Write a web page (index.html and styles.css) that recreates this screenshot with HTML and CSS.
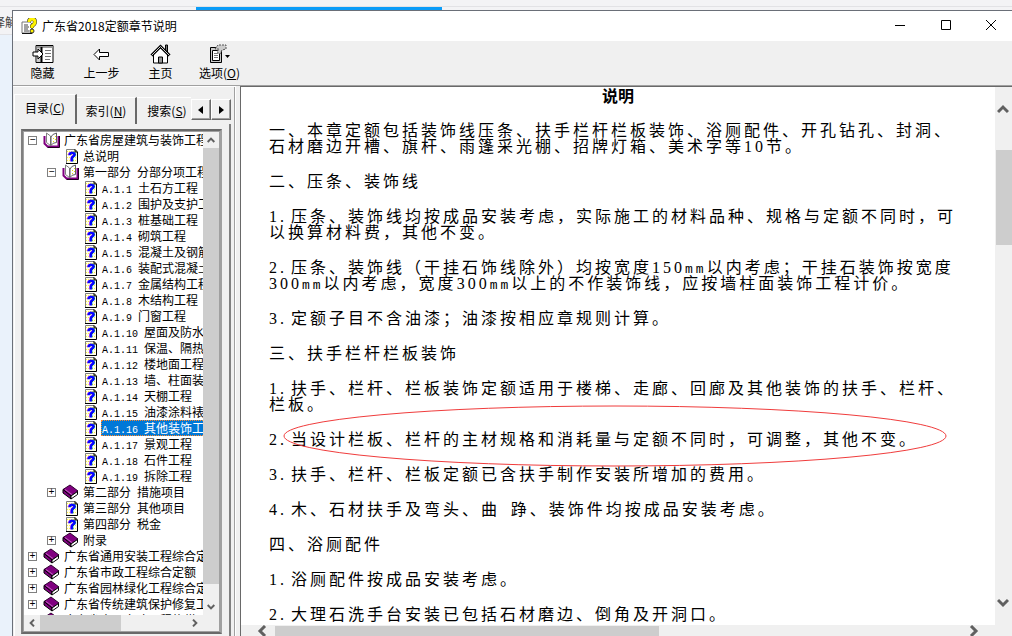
FILE: index.html
```html
<!DOCTYPE html>
<html lang="zh-CN">
<head>
<meta charset="utf-8">
<title>广东省2018定额章节说明</title>
<link rel="stylesheet" href="styles.css">
</head>
<body>
<svg class="defs" aria-hidden="true">
  <symbol id="open" viewBox="0 0 17 16">
    <path d="M1.500 4v7.500l3 3h11V4" fill="#fff" stroke="#800080" stroke-width="2"/>
    <path d="M4.500 15.500h12V4" fill="none" stroke="#200020"/>
    <path d="M3.500 1l4 3v9.500l-4-3z" fill="#fff" stroke="#808080"/>
    <path d="M8 13.500V5q1-3 5.500-4v9.500q-4 0-5.500 3z" fill="#fff" stroke="#606060"/>
    <path d="M10 6.500h1M12 4.500h1M10 9.500h1M12 7.500h1" stroke="#e8e000"/>
  </symbol>
  <symbol id="book" viewBox="0 0 17 16">
    <path d="M1 5.500L8 1l8 6-7 5z" fill="#800080" stroke="#300030"/>
    <path d="M1 5.500V9l8 6v-3z" fill="#800080" stroke="#000"/>
    <path d="M9 12l6.500-4.500v3L9 15z" fill="#fff" stroke="#000"/>
    <path d="M3 5.500l7 5" stroke="#c060c0"/>
  </symbol>
  <symbol id="page" viewBox="0 0 12 15">
    <path d="M0 0h10l2 3v12H0z" fill="#ffffe8"/>
    <path d="M1 2.500h9M1 5.500h9M1 8.500h9M1 11.500h9" stroke="#fff040" stroke-dasharray="1 1"/>
    <path d="M.5 14V.5H9" fill="none" stroke="#808080"/>
    <path d="M0 14.500h11.500V3L9 .5V3h2" fill="none" stroke="#000"/>
    <text x="6" y="12" text-anchor="middle" class="mark">?</text>
  </symbol>
  <symbol id="up" viewBox="0 0 12 10"><path d="M1 8l5-5 5 5" fill="none" stroke="#606060" stroke-width="3"/></symbol>
  <symbol id="down" viewBox="0 0 12 10"><path d="M1 2l5 5 5-5" fill="none" stroke="#606060" stroke-width="3"/></symbol>
  <symbol id="left" viewBox="0 0 10 12"><path d="M8 1L3 6l5 5" fill="none" stroke="#606060" stroke-width="3"/></symbol>
  <symbol id="right" viewBox="0 0 10 12"><path d="M2 1l5 5-5 5" fill="none" stroke="#606060" stroke-width="3"/></symbol>
</svg>

<div class="desktop">
  <div class="back-top"><div class="back-tab"></div></div>
  <div class="back-side"><span class="back-text">译解</span></div>
  <main class="window">
    <header class="titlebar">
      <svg class="app-icon" viewBox="0 0 16 16" aria-hidden="true">
        <path d="M1 4h8l2 2v9H1z" fill="#fff" stroke="#777"/>
        <path d="M11 7v8.500H1" fill="none" stroke="#111"/>
        <path d="M3 7h4M3 9h5M3 11h4M3 13h5" stroke="#444"/>
        <path d="M8 4q0-3 3-3t3 3q0 2-3 4v2" fill="none" stroke="#333" stroke-width="4"/>
        <path d="M8 4q0-3 3-3t3 3q0 2-3 4v2" fill="none" stroke="#fff200" stroke-width="3"/>
        <circle cx="11" cy="13" r="2" fill="#fff200" stroke="#333"/>
      </svg>
      <h1 class="title">广东省2018定额章节说明</h1>
      <button class="caption" aria-label="最小化"><svg viewBox="0 0 10 10"><path d="M0 5.500h10" /></svg></button>
      <button class="caption" aria-label="最大化"><svg viewBox="0 0 10 10"><path d="M.5.5h9v9h-9z"/></svg></button>
      <button class="caption close" aria-label="关闭"><svg viewBox="0 0 10 10"><path d="M0 0l10 10M10 0L0 10"/></svg></button>
    </header>
    <nav class="toolbar">
      <button class="tool"><svg viewBox="0 0 22 20" aria-hidden="true">
        <path d="M4 1.500h17v17H4z" fill="#fff" stroke="#000"/><path d="M5 2h15.500v2H5z" fill="#999"/><path d="M5 4h4v14H5z" fill="#ccc"/><path d="M9.500 3v15" stroke="#000" stroke-width="2"/>
        <path d="M13 6.500h6M13 9.500h6M13 12.500h6M13 15.500h5" stroke="#777"/><path d="M1 8h5V5l5 5-5 5v-3H1z" fill="#fff" stroke="#000"/></svg><span>隐藏</span></button>
      <button class="tool"><svg viewBox="0 0 22 20" aria-hidden="true"><path d="M3 10.500L8.500 5v3.500h9v4h-9V16z" fill="#fff" stroke="#000"/></svg><span>上一步</span></button>
      <button class="tool"><svg viewBox="0 0 22 20" aria-hidden="true"><path d="M15.500 1h2v9h-2z" fill="#777" stroke="#000"/><path d="M3.500 10L10.500 3l7 7v9h-14z" fill="#fff" stroke="#000"/><path d="M1.500 11.500l9-9 9 9" fill="none" stroke="#000" stroke-width="3"/><path d="M1.500 11.500l9-9 9 9" fill="none" stroke="#ccc"/><path d="M8.500 13h4v6h-4z" fill="#999" stroke="#000"/></svg><span>主页</span></button>
      <button class="tool"><svg viewBox="0 0 22 20" aria-hidden="true"><path d="M1.500 3.500h11v15h-11z" fill="#ccc" stroke="#000"/><path d="M3.500 6.500h7v10h-7z" fill="#fff" stroke="#000"/><path d="M5 9.500h4M5 11.500h4M5 13.500h4" stroke="#777"/><path d="M6 5l3-4h8v4l-4 1-2 4-3-2 2-3z" fill="#ccc" stroke="#555" stroke-dasharray="2 1"/><path d="M16 11h5l-2.500 3z"/></svg><span>选项(<u>O</u>)</span></button>
    </nav>
    <div class="body">
      <aside class="sidebar">
        <div class="tabs">
          <button class="tab active">目录(<u>C</u>)</button>
          <button class="tab">索引(<u>N</u>)</button>
          <button class="tab last">搜索(<u>S</u>)</button>
          <button class="spin" aria-label="向左"><svg viewBox="0 0 10 10"><path d="M7 1v8L2 5z"/></svg></button>
          <button class="spin" aria-label="向右"><svg viewBox="0 0 10 10"><path d="M3 1v8l5-4z"/></svg></button>
        </div>
        <div class="panel">
          <div class="tree-frame">
            <div class="tree">
              <ul>
                <li><div class="row"><button class="exp">−</button><svg class="ic"><use href="#open"/></svg><a>广东省房屋建筑与装饰工程</a></div>
                  <ul>
                    <li><div class="row"><i class="exp-gap"></i><svg class="ic pg"><use href="#page"/></svg><a>总说明</a></div></li>
                    <li><div class="row"><button class="exp">−</button><svg class="ic"><use href="#open"/></svg><a>第一部分<span> </span>分部分项工程</a></div>
                      <ul>
                        <li><div class="row"><i class="exp-gap"></i><svg class="ic pg"><use href="#page"/></svg><a><span>A.1.1 </span>土石方工程</a></div></li>
                        <li><div class="row"><i class="exp-gap"></i><svg class="ic pg"><use href="#page"/></svg><a><span>A.1.2 </span>围护及支护工程</a></div></li>
                        <li><div class="row"><i class="exp-gap"></i><svg class="ic pg"><use href="#page"/></svg><a><span>A.1.3 </span>桩基础工程</a></div></li>
                        <li><div class="row"><i class="exp-gap"></i><svg class="ic pg"><use href="#page"/></svg><a><span>A.1.4 </span>砌筑工程</a></div></li>
                        <li><div class="row"><i class="exp-gap"></i><svg class="ic pg"><use href="#page"/></svg><a><span>A.1.5 </span>混凝土及钢筋</a></div></li>
                        <li><div class="row"><i class="exp-gap"></i><svg class="ic pg"><use href="#page"/></svg><a><span>A.1.6 </span>装配式混凝土</a></div></li>
                        <li><div class="row"><i class="exp-gap"></i><svg class="ic pg"><use href="#page"/></svg><a><span>A.1.7 </span>金属结构工程</a></div></li>
                        <li><div class="row"><i class="exp-gap"></i><svg class="ic pg"><use href="#page"/></svg><a><span>A.1.8 </span>木结构工程</a></div></li>
                        <li><div class="row"><i class="exp-gap"></i><svg class="ic pg"><use href="#page"/></svg><a><span>A.1.9 </span>门窗工程</a></div></li>
                        <li><div class="row"><i class="exp-gap"></i><svg class="ic pg"><use href="#page"/></svg><a><span>A.1.10 </span>屋面及防水</a></div></li>
                        <li><div class="row"><i class="exp-gap"></i><svg class="ic pg"><use href="#page"/></svg><a><span>A.1.11 </span>保温、隔热</a></div></li>
                        <li><div class="row"><i class="exp-gap"></i><svg class="ic pg"><use href="#page"/></svg><a><span>A.1.12 </span>楼地面工程</a></div></li>
                        <li><div class="row"><i class="exp-gap"></i><svg class="ic pg"><use href="#page"/></svg><a><span>A.1.13 </span>墙、柱面装</a></div></li>
                        <li><div class="row"><i class="exp-gap"></i><svg class="ic pg"><use href="#page"/></svg><a><span>A.1.14 </span>天棚工程</a></div></li>
                        <li><div class="row"><i class="exp-gap"></i><svg class="ic pg"><use href="#page"/></svg><a><span>A.1.15 </span>油漆涂料裱</a></div></li>
                        <li><div class="row"><i class="exp-gap"></i><svg class="ic pg"><use href="#page"/></svg><a class="selected"><span>A.1.16 </span>其他装饰工程</a></div></li>
                        <li><div class="row"><i class="exp-gap"></i><svg class="ic pg"><use href="#page"/></svg><a><span>A.1.17 </span>景观工程</a></div></li>
                        <li><div class="row"><i class="exp-gap"></i><svg class="ic pg"><use href="#page"/></svg><a><span>A.1.18 </span>石件工程</a></div></li>
                        <li><div class="row"><i class="exp-gap"></i><svg class="ic pg"><use href="#page"/></svg><a><span>A.1.19 </span>拆除工程</a></div></li>
                      </ul></li>
                    <li><div class="row"><button class="exp">+</button><svg class="ic"><use href="#book"/></svg><a>第二部分<span> </span>措施项目</a></div></li>
                    <li><div class="row"><i class="exp-gap"></i><svg class="ic pg"><use href="#page"/></svg><a>第三部分<span> </span>其他项目</a></div></li>
                    <li><div class="row"><i class="exp-gap"></i><svg class="ic pg"><use href="#page"/></svg><a>第四部分<span> </span>税金</a></div></li>
                    <li><div class="row"><button class="exp">+</button><svg class="ic"><use href="#book"/></svg><a>附录</a></div></li>
                  </ul></li>
                <li><div class="row"><button class="exp">+</button><svg class="ic"><use href="#book"/></svg><a>广东省通用安装工程综合定额</a></div></li>
                <li><div class="row"><button class="exp">+</button><svg class="ic"><use href="#book"/></svg><a>广东省市政工程综合定额</a></div></li>
                <li><div class="row"><button class="exp">+</button><svg class="ic"><use href="#book"/></svg><a>广东省园林绿化工程综合定额</a></div></li>
                <li><div class="row"><button class="exp">+</button><svg class="ic"><use href="#book"/></svg><a>广东省传统建筑保护修复工程</a></div></li>
                <li><div class="row"><i class="exp-gap"></i><svg class="ic"><use href="#book"/></svg><a>广东省房屋市政工程修缮</a></div></li>
              </ul>
            </div>
            <div class="vbar"><svg class="ar"><use href="#up"/></svg><div class="thumb tree-v"></div><svg class="ar"><use href="#down"/></svg></div>
            <div class="hbar"><svg class="ar"><use href="#left"/></svg><div class="track"><div class="thumb tree-h"></div></div><svg class="ar"><use href="#right"/></svg></div>
          </div>
        </div>
      </aside>
      <section class="viewer">
        <article class="doc">
          <h2>说明</h2>
          <p>一、本章定额包括装饰线压条、扶手栏杆栏板装饰、浴厕配件、开孔钻孔、封洞、石材磨边开槽、旗杆、雨篷采光棚、招牌灯箱、美术字等<span>10</span>节。</p>
          <p>二、压条、装饰线</p>
          <p><span class="no">1.</span>压条、装饰线均按成品安装考虑，实际施工的材料品种、规格与定额不同时，可以换算材料费，其他不变。</p>
          <p><span class="no">2.</span>压条、装饰线（干挂石饰线除外）均按宽度<span>150<small>mm</small></span>以内考虑；干挂石装饰按宽度<span>300<small>mm</small></span>以内考虑，宽度<span>300<small>mm</small></span>以上的不作装饰线，应按墙柱面装饰工程计价。</p>
          <p><span class="no">3.</span>定额子目不含油漆；油漆按相应章规则计算。</p>
          <p>三、扶手栏杆栏板装饰</p>
          <p><span class="no">1.</span>扶手、栏杆、栏板装饰定额适用于楼梯、走廊、回廊及其他装饰的扶手、栏杆、栏板。</p>
          <p class="circled"><span class="no">2.</span>当设计栏板、栏杆的主材规格和消耗量与定额不同时，可调整，其他不变。<svg class="ring" viewBox="0 0 664 62" aria-hidden="true"><ellipse cx="332" cy="31" rx="331" ry="30"/></svg></p>
          <p><span class="no">3.</span>扶手、栏杆、栏板定额已含扶手制作安装所增加的费用。</p>
          <p><span class="no">4.</span>木、石材扶手及弯头、曲<small> </small>踭、装饰件均按成品安装考虑。</p>
          <p>四、浴厕配件</p>
          <p><span class="no">1.</span>浴厕配件按成品安装考虑。</p>
          <p><span class="no">2.</span>大理石洗手台安装已包括石材磨边、倒角及开洞口。</p>
        </article>
        <div class="vbar"><svg class="ar"><use href="#up"/></svg><div class="track"><div class="thumb doc-v"></div></div><svg class="ar"><use href="#down"/></svg></div>
        <div class="hbar"><svg class="ar"><use href="#left"/></svg><div class="track"><div class="thumb doc-h"></div></div><svg class="ar"><use href="#right"/></svg></div>
      </section>
    </div>
  </main>
</div>
</body>
</html>
```
FILE: styles.css
```css
* { box-sizing: border-box; }
body {
  margin: 0;
  font: 12px/16px "Noto Sans CJK SC", sans-serif;
  color: #000;
  overflow: hidden;
}
button { font: inherit; color: inherit; padding: 0; border: 0; background: none; }
ul { margin: 0; padding: 0; list-style: none; }
svg { display: block; flex: none; }
.defs { position: absolute; width: 0; height: 0; }
.mark { font: bold 13px "Liberation Sans", sans-serif; fill: #0000ff; stroke: #0000ff; stroke-width: 1px; }

.desktop {
  height: 100vh;
  display: grid;
  grid-template: 10px minmax(0, 1fr) / 12px minmax(0, 1fr);
  background: #eaf2fb;
}
.back-top {
  grid-column: 1 / 3;
  padding: 7px 0 0 196px;
  background: linear-gradient(#f3f3f5 6px, #e2e2e5 6px 7px, #f3f3f5 7px);
}
.back-tab { width: 246px; height: 3px; background: #0a9cf8; }
.back-side { overflow: hidden; background: linear-gradient(#f3f3f5 24px, #e2e2e5 24px 25px, #eaf2fb 25px); }
.back-text { display: block; padding-top: 4px; text-indent: -7px; white-space: nowrap; color: #444; }

.window {
  display: flex;
  flex-direction: column;
  min-height: 0;
  background: #f0f0f0;
  border: 1px solid #6a6f78;
  border-width: 1px 0 0 1px;
}
.titlebar { display: flex; align-items: center; height: 30px; flex: none; background: #fff; }
.app-icon { width: 16px; height: 16px; margin: 0 5px 0 8px; }
.title { flex: 1; margin: 0; font-size: 12px; font-weight: 400; }
.caption { width: 46px; height: 30px; padding-bottom: 2px; display: grid; place-items: center; }
.caption.close { width: 43px; }
.caption svg { width: 10px; height: 10px; overflow: visible; fill: none; stroke: #000; }

.toolbar { display: flex; height: 44px; flex: none; padding-top: 3px; }
.tool { width: 59px; display: flex; flex-direction: column; align-items: center; justify-content: flex-start; gap: 1px; white-space: nowrap; }
.tool svg { width: 22px; height: 20px; }

.body { flex: 1; min-height: 0; display: grid; grid-template-columns: 223px minmax(0, 1fr); border-top: 1px solid #a0a0a0; }
.sidebar { min-height: 0; display: flex; flex-direction: column; padding: 7px 0 0 1px; border-top: 1px solid #fff; border-right: 1px solid #fff; box-shadow: inset -1px 0 #a0a0a0; }
.tabs { display: flex; align-items: flex-end; width: 217px; height: 30px; }
.tab { height: 27px; width: 60px; padding-bottom: 1px; border-top: 1px solid #fff; border-right: 2px solid #696969; }
.tab.active { height: 30px; width: 63px; padding-bottom: 4px; border-left: 1px solid #fff; }
.tab.last { width: 52px; flex: 1; border-right: 0; padding-left: 6px; text-align: center; white-space: nowrap; }
.spin { width: 20px; height: 21px; margin-bottom: 4px; display: grid; place-items: center; border: 1px solid; border-color: #fff #696969 #696969 #fff; box-shadow: inset -1px -1px #a0a0a0; }
.spin svg { width: 10px; height: 10px; }
.panel { flex: 1; min-height: 0; width: 217px; padding: 5px 7px 2px 6px; border-left: 1px solid #fff; border-right: 2px solid #808080; }
.tree-frame {
  height: 100%;
  display: grid;
  grid-template: minmax(0, 1fr) 16px / minmax(0, 1fr) 16px;
  background: #f0f0f0;
  border: 2px solid;
  border-color: #696969 #a0a0a0 #696969 #808080;
  outline: 1px solid #a0a0a0;
  outline-offset: -3px;
  padding: 1px;
}
.tree { overflow: hidden; background: #fff; padding-left: 4px; }
.tree ul ul { padding-left: 19px; }
.row { display: flex; align-items: center; height: 16px; white-space: nowrap; }
.exp { width: 9px; height: 9px; flex: none; display: grid; place-items: center; font: 10px/7px "Liberation Mono", monospace; border: 1px solid #808080; background: #fff; }
.exp-gap { width: 9px; flex: none; }
.ic { width: 17px; height: 16px; margin: 0 3px 0 6px; }
.ic.pg { width: 12px; height: 15px; margin: 0 4px 0 10px; }
.row a { height: 16px; padding: 0 1px; }
.row span { font: 10px/8px "Liberation Mono", monospace; white-space: pre; }
.row .selected { flex: 1; color: #fff; background: #0078d7; outline: 1px dotted #ff8728; outline-offset: -1px; }

.vbar { display: flex; flex-direction: column; align-items: center; background: #f0f0f0; }
.hbar { display: flex; align-items: center; background: #f0f0f0; grid-column: 1 / 3; }
.track { flex: 1; align-self: stretch; min-width: 0; }
.thumb { background: #cdcdcd; }
.tree-frame .ar { width: 8px; height: 8px; }
.tree-frame .vbar .ar { margin: 4px 0; }
.tree-frame .hbar .ar { margin: 0 4px; }
.tree-v { width: 100%; flex: 1; margin-bottom: 15px; }
.tree-frame .hbar { padding-right: 16px; }
.tree-h { width: 55%; height: 100%; }

.viewer {
  min-height: 0;
  display: grid;
  grid-template: minmax(0, 1fr) 11px / minmax(0, 1fr) 17px;
  margin-left: 4px;
  border-top: 1px solid #696969;
  border-left: 1px solid #696969;
  background: #fff;
}
.doc { overflow: hidden; padding: 0 28px; font-size: 16px; line-height: 16px; letter-spacing: 3px; text-spacing-trim: space-all; }
.doc h2 { margin: 0 0 18px; font-size: 16px; line-height: 16px; letter-spacing: 0; text-align: center; }
.doc p { margin: 0 0 19px; }
.doc span { font: 16px/8px "Liberation Serif", serif; }
.doc small { font: 13px/8px "Liberation Mono", monospace; white-space: pre; }
.doc .no { display: inline-block; width: 22px; }
.circled { position: relative; }
.ring { position: absolute; left: 14px; top: -25px; width: 664px; height: 62px; fill: none; stroke: #f03c3c; }
.viewer .ar { width: 12px; height: 12px; }
.viewer .vbar { padding-left: 1px; align-items: stretch; }
.viewer .vbar .ar { margin: 16px 1px; }
.viewer .vbar .track { padding-top: 19px; }
.doc-v { height: 95px; }
.viewer .hbar { padding: 1px 32px 0 15px; gap: 7px; }
.doc-h { width: 56%; height: 100%; }
```
